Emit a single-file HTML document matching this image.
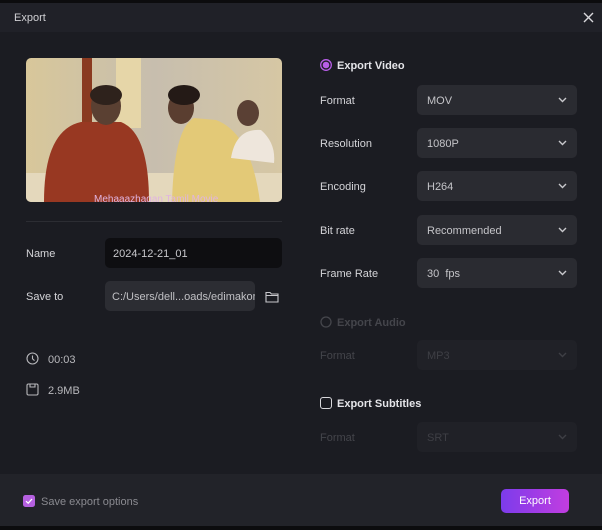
<!DOCTYPE html>
<html><head><meta charset="utf-8"><style>
*{margin:0;padding:0;box-sizing:border-box}
body{width:602px;height:530px;background:#0c0c0e;font-family:"Liberation Sans",sans-serif;position:relative;overflow:hidden;color:#d8d8dc;font-size:11px}
.abs{position:absolute}
.title{left:0;top:3px;width:602px;height:29px;background:#202128}
.main{left:0;top:32px;width:602px;height:442px;background:#1b1c22}
.foot{left:0;top:474px;width:602px;height:52px;background:#222329}
.lbl{font-size:11px;color:#d4d4d8}
.dd{left:417px;width:160px;height:30px;border-radius:5px;background:#2a2b31;color:#c4c4c8;font-size:11px;padding:10px 0 0 10px}
.dd svg{position:absolute;right:10px;top:12px}
.dis{background:#202127;color:#3e3f45}
.dislbl{color:#44454b}
</style></head><body>
<div class="abs title"></div>
<div class="abs" style="left:14px;top:12px;font-size:11px;color:#d0d0d4">Export</div>
<svg class="abs" style="left:583px;top:12px" width="11" height="11"><path d="M1 1L10 10M10 1L1 10" stroke="#d8d8dc" stroke-width="1.4"/></svg>
<div class="abs main"></div>
<svg class="abs" style="left:26px;top:58px;border-radius:5px" width="256" height="144" viewBox="0 0 256 144">
<defs><linearGradient id="bg" x1="0" x2="1"><stop offset="0" stop-color="#d8c79a"/><stop offset=".5" stop-color="#c7beae"/><stop offset="1" stop-color="#d6c7a4"/></linearGradient></defs>
<rect width="256" height="144" fill="url(#bg)"/>
<rect x="56" y="0" width="10" height="90" fill="#8a3a20"/>
<rect x="90" y="0" width="25" height="70" fill="#e6d6a8"/>
<rect x="0" y="115" width="256" height="29" fill="#e4d8bc"/>
<path d="M18 144 Q18 72 55 64 L95 64 Q123 75 123 144Z" fill="#983822"/>
<ellipse cx="80" cy="48" rx="15" ry="19" fill="#5a4032"/>
<ellipse cx="80" cy="37" rx="16" ry="10" fill="#2e221c"/>
<path d="M146 144 Q148 70 168 60 L190 62 Q225 75 234 144Z" fill="#e3c977"/>
<ellipse cx="155" cy="50" rx="13" ry="16" fill="#5a3e30"/>
<ellipse cx="158" cy="37" rx="16" ry="10" fill="#241a16"/>
<ellipse cx="222" cy="55" rx="11" ry="13" fill="#5a4034"/>
<path d="M205 100 Q210 70 235 72 Q250 85 248 105Z" fill="#eee6dc"/>
<text x="68" y="144" font-size="10" fill="#e0b4e0" font-family="Liberation Sans">Mehaaazhagan Tamil Movie</text>
</svg>
<div class="abs" style="left:26px;top:221px;width:256px;height:1px;background:#2c2d33"></div>
<div class="abs lbl" style="left:26px;top:248px">Name</div>
<div class="abs" style="left:105px;top:238px;width:177px;height:30px;border-radius:5px;background:#0e0e11;color:#c8c8cc;padding:10px 0 0 8px">2024-12-21_01</div>
<div class="abs lbl" style="left:26px;top:291px">Save to</div>
<div class="abs" style="left:105px;top:281px;width:150px;height:30px;border-radius:5px;background:#2c2d33;color:#c0c0c4;padding:10px 0 0 7px;white-space:nowrap;overflow:hidden">C:/Users/dell...oads/edimakor</div>
<svg class="abs" style="left:265px;top:291px" width="14" height="12"><path d="M1 1.5h4l1.5 1.5H13v8H1z M1 4.5h12" fill="none" stroke="#c8c8cc" stroke-width="1.1"/></svg>
<svg class="abs" style="left:26px;top:352px" width="13" height="13"><circle cx="6.5" cy="6.5" r="5.5" fill="none" stroke="#b8b8bc" stroke-width="1.1"/><path d="M6.5 3.5v3.3l2 1.8" fill="none" stroke="#b8b8bc" stroke-width="1.1"/></svg>
<div class="abs" style="left:48px;top:354px;color:#b8b8bc">00:03</div>
<svg class="abs" style="left:26px;top:383px" width="13" height="13"><rect x="1" y="1" width="11" height="11" rx="1.5" fill="none" stroke="#b8b8bc" stroke-width="1.1"/><path d="M4 1v3h5V1" fill="none" stroke="#b8b8bc" stroke-width="1.1"/></svg>
<div class="abs" style="left:48px;top:385px;color:#b8b8bc">2.9MB</div>

<svg class="abs" style="left:320px;top:59px" width="12" height="12"><circle cx="6" cy="6" r="5.3" fill="none" stroke="#b85ee8" stroke-width="1.3"/><circle cx="6" cy="6" r="3.3" fill="#b85ee8"/></svg>
<div class="abs" style="left:337px;top:60px;font-weight:bold;color:#e4e4e8">Export Video</div>
<div class="abs lbl" style="left:320px;top:95px">Format</div>
<div class="abs dd" style="top:85px">MOV<svg width="9" height="6"><path d="M1 1l3.5 3.5L8 1" fill="none" stroke="#c8c8cc" stroke-width="1.4"/></svg></div>
<div class="abs lbl" style="left:320px;top:138px">Resolution</div>
<div class="abs dd" style="top:128px">1080P<svg width="9" height="6"><path d="M1 1l3.5 3.5L8 1" fill="none" stroke="#c8c8cc" stroke-width="1.4"/></svg></div>
<div class="abs lbl" style="left:320px;top:181px">Encoding</div>
<div class="abs dd" style="top:171px">H264<svg width="9" height="6"><path d="M1 1l3.5 3.5L8 1" fill="none" stroke="#c8c8cc" stroke-width="1.4"/></svg></div>
<div class="abs lbl" style="left:320px;top:225px">Bit rate</div>
<div class="abs dd" style="top:215px">Recommended<svg width="9" height="6"><path d="M1 1l3.5 3.5L8 1" fill="none" stroke="#c8c8cc" stroke-width="1.4"/></svg></div>
<div class="abs lbl" style="left:320px;top:268px">Frame Rate</div>
<div class="abs dd" style="top:258px">30&nbsp; fps<svg width="9" height="6"><path d="M1 1l3.5 3.5L8 1" fill="none" stroke="#c8c8cc" stroke-width="1.4"/></svg></div>

<svg class="abs" style="left:320px;top:316px" width="12" height="12"><circle cx="6" cy="6" r="5" fill="none" stroke="#45464c" stroke-width="1.3"/></svg>
<div class="abs dislbl" style="left:337px;top:317px;font-weight:bold">Export Audio</div>
<div class="abs dislbl" style="left:320px;top:350px">Format</div>
<div class="abs dd dis" style="top:340px">MP3<svg width="9" height="6"><path d="M1 1l3.5 3.5L8 1" fill="none" stroke="#3e3f45" stroke-width="1.4"/></svg></div>

<div class="abs" style="left:320px;top:397px;width:12px;height:12px;border:1.3px solid #d8d8dc;border-radius:3px"></div>
<div class="abs" style="left:337px;top:398px;font-weight:bold;color:#e4e4e8">Export Subtitles</div>
<div class="abs dislbl" style="left:320px;top:432px">Format</div>
<div class="abs dd dis" style="top:422px">SRT<svg width="9" height="6"><path d="M1 1l3.5 3.5L8 1" fill="none" stroke="#3e3f45" stroke-width="1.4"/></svg></div>

<div class="abs foot"></div>
<svg class="abs" style="left:23px;top:495px" width="12" height="12"><rect width="12" height="12" rx="2.5" fill="#b560e0"/><path d="M3 6.2l2.2 2L9 4" fill="none" stroke="#fff" stroke-width="1.3"/></svg>
<div class="abs" style="left:41px;top:496px;color:#8a8a90">Save export options</div>
<div class="abs" style="left:501px;top:489px;width:68px;height:24px;border-radius:5px;background:linear-gradient(90deg,#7c3ceb,#c23de0);color:#fff;text-align:center;line-height:25px">Export</div>
</body></html>
